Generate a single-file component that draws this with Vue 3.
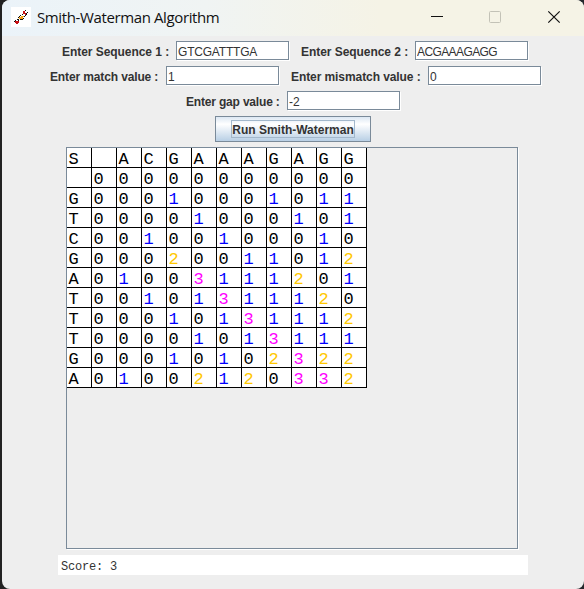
<script setup>
import { reactive } from 'vue'

const form = reactive({
  seq1: 'GTCGATTTGA',
  seq2: 'ACGAAAGAGG',
  match: '1',
  mismatch: '0',
  gap: '-2',
})

const rows = [
  ' 00000000000',
  'G00010001011',
  'T00001000101',
  'C00100100010',
  'G00020011012',
  'A01003111201',
  'T00101311120',
  'T00010131112',
  'T00001013111',
  'G00010102322',
  'A01002120332',
]
const cells = ['S ' + form.seq2, ...rows].flatMap((r) => r.split(''))
const tone = (c) => (/[1-3]/.test(c) ? 'v' + c : 'v0')
</script>

<template>
  <div class="desktop">
    <div class="window">
      <header class="titlebar">
        <svg class="logo" width="20" height="20" viewBox="0 0 20 20" shape-rendering="crispEdges">
          <rect width="20" height="20" fill="#fff" />
          <path fill="#c80f14" d="M4 14h4v2h-4zM5 16h2v1h-2zM12 4h2v3h-2zM14 6h1v2h-1z" />
          <path fill="#111" d="M3 14h1v1h-1zM4 13h1v1h-1zM6 12h2v1h-2zM7 13h1v1h-1zM8 9h1v1h-1zM7 10h1v1h-1zM9 8h1v1h-1zM9 12h3v1h-3zM12 11h1v1h-1zM11 7h1v1h-1zM13 9h1v1h-1zM14 8h1v1h-1zM14 3h1v1h-1zM15 6h1v2h-1zM16 5h1v1h-1z" />
          <path fill="#f5a21a" d="M8 10h4v2h-4zM10 9h3v1h-3z" />
        </svg>
        <span class="title">Smith-Waterman Algorithm</span>
        <div class="controls">
          <svg width="14" height="14" viewBox="0 0 14 14"><path d="M1 6.5h12" stroke="#111" /></svg>
          <svg width="14" height="14" viewBox="0 0 14 14"><rect x="1.5" y="1.5" width="11" height="11" rx="1" fill="none" stroke="#c3c2b7" /></svg>
          <svg width="14" height="14" viewBox="0 0 14 14"><path d="M1.3 1.3l11.4 11.4M12.7 1.3L1.3 12.7" stroke="#111" stroke-width="1.2" /></svg>
        </div>
      </header>
      <main class="body">
        <div class="line first">
          <label class="w-seq"><span>Enter Sequence 1 :</span></label>
          <input v-model="form.seq1" class="seq1" />
          <label class="w-seq gap"><span>Enter Sequence 2 :</span></label>
          <input v-model="form.seq2" class="seq2" />
        </div>
        <div class="line second">
          <label class="w-match"><span>Enter match value :</span></label>
          <input v-model="form.match" />
          <label class="w-mis gap"><span>Enter mismatch value :</span></label>
          <input v-model="form.mismatch" />
        </div>
        <div class="line third">
          <label class="w-gap"><span>Enter gap value :</span></label>
          <input v-model="form.gap" />
        </div>
        <button class="run"><span>Run Smith-Waterman</span></button>
        <div class="pane">
          <div class="matrix">
            <div v-for="(c, i) in cells" :key="i" class="cell" :class="tone(c)">{{ c }}</div>
          </div>
        </div>
        <div class="score">Score: 3</div>
      </main>
    </div>
  </div>
</template>

<style>
body { overflow: hidden; }
</style>

<style scoped>
* { box-sizing: border-box; }
.desktop {
  width: 584px;
  height: 589px;
  background: linear-gradient(90deg, #222 50%, #25282c 50%);
}
.window {
  margin-left: 2px;
  width: 582px;
  height: 589px;
  border-radius: 8px;
  overflow: hidden;
  background: #eee;
}
.titlebar {
  display: flex;
  align-items: center;
  height: 36px;
  padding: 0 23px 2px 9px;
  background: linear-gradient(90deg, #ebf3f9 0%, #f0f4f3 35%, #f5f3e6 65%, #f5f3e6 100%);
}
.logo { display: block; flex: none; }
.title {
  margin-left: 6px;
  font: 15px/20px "Open Sans", sans-serif;
  letter-spacing: -0.38px;
  color: #111;
  white-space: nowrap;
}
.controls { display: flex; gap: 45px; margin-left: auto; }
.controls svg { display: block; }
.controls svg:first-child { margin-right: -1px; }
.body { display: flex; flex-direction: column; padding-top: 5px; }
.line { display: flex; height: 20px; margin-bottom: 5px; }
.first { padding-left: 60px; }
.second { padding-left: 48px; }
.third { padding-left: 184px; }
label {
  flex: none;
  font: bold 12px/22px "Liberation Sans", Arial, sans-serif;
  color: #333;
  white-space: nowrap;
}
.w-seq { width: 114px; letter-spacing: -0.05px; }
.w-match { width: 116px; letter-spacing: -0.13px; }
.w-mis { width: 137px; letter-spacing: -0.08px; }
.w-gap { width: 101px; letter-spacing: -0.18px; }
.gap { margin-left: 12px; }
input {
  flex: none;
  width: 113px;
  height: 19px;
  margin: 0;
  padding: 2px 1px 0 1px;
  border: 1px solid #7a8a99;
  border-radius: 0;
  outline: none;
  background: #fff;
  box-shadow: 1px 1px 0 #fff;
  font: 12px/16px "Liberation Sans", Arial, sans-serif;
  color: #333;
}
.seq1 { letter-spacing: -0.2px; }
.seq2 { letter-spacing: -0.6px; }
.run {
  display: flex;
  align-items: center;
  justify-content: center;
  width: 156px;
  height: 26px;
  margin: 0 0 5px 213px;
  padding: 0;
  border: 1px solid #7a8a99;
  background: linear-gradient(#dde8f3 0%, #fff 30%, #b8cfe5 100%);
  font: bold 12px/16px "Liberation Sans", Arial, sans-serif;
  color: #333;
}
.run span {
  width: 124px;
  height: 18px;
  border: 1px solid #a3b8cc;
  line-height: 18px;
  white-space: nowrap;
}
.pane {
  width: 452px;
  height: 402px;
  margin-left: 64px;
  border: 1px solid #7a8a99;
  box-shadow: 1px 1px 0 #fff;
}
.matrix {
  display: grid;
  grid-template-columns: repeat(12, 25px);
  grid-auto-rows: 20px;
  width: 300px;
}
.cell {
  padding-left: 1.5px;
  border-right: 1px solid #000;
  border-bottom: 1px solid #000;
  background: #fff;
  font: 17px/24px "Liberation Mono", monospace;
  white-space: pre;
}
.v0 { color: #000; }
.v1 { color: #00f; }
.v2 { color: #ffc800; }
.v3 { color: #f0f; }
.score {
  width: 470px;
  height: 20px;
  margin: 6px 0 0 56px;
  padding-left: 3px;
  background: #fff;
  font: 12px/25px "Liberation Mono", monospace;
  letter-spacing: -0.2px;
  color: #333;
}
</style>
